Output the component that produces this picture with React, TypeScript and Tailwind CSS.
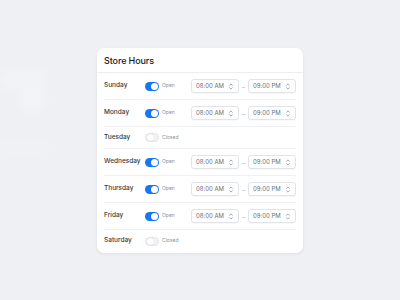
import React from "react";

// ─── Data ────────────────────────────────────────────────────────

interface DayHours {
  day: string;
  open: boolean;
  from?: string;
  to?: string;
}

const hours: DayHours[] = [
  { day: "Sunday", open: true, from: "08:00 AM", to: "09:00 PM" },
  { day: "Monday", open: true, from: "08:00 AM", to: "09:00 PM" },
  { day: "Tuesday", open: false },
  { day: "Wednesday", open: true, from: "08:00 AM", to: "09:00 PM" },
  { day: "Thursday", open: true, from: "08:00 AM", to: "09:00 PM" },
  { day: "Friday", open: true, from: "08:00 AM", to: "09:00 PM" },
  { day: "Saturday", open: false },
];

// ─── Toggle ──────────────────────────────────────────────────────

function Toggle({ on }: { on: boolean }) {
  return (
    <span
      className={`flex h-[9px] w-[14px] shrink-0 items-center rounded-full p-[1px] ${
        on ? "justify-end bg-[#1677f2]" : "justify-start border border-[#e3e5e9] bg-[#f1f2f4]"
      }`}
    >
      <span className="h-[7px] w-[7px] rounded-full bg-white shadow-[0_0_1px_rgba(0,0,0,0.25)]" />
    </span>
  );
}

// ─── Time Select ─────────────────────────────────────────────────

function TimeSelect({ value }: { value: string }) {
  return (
    <div className="flex h-[14px] w-[48px] items-center justify-between rounded-[3px] border border-[#e0e3e8] bg-white pl-[4px] pr-[5px] shadow-[0_1px_1px_rgba(0,0,0,0.03)]">
      <span className="text-[6px] leading-none text-[#6a707a]">{value}</span>
      <svg width="4" height="7" viewBox="0 0 4 7" fill="none" stroke="#8a919b" strokeWidth="0.8" strokeLinecap="round" strokeLinejoin="round">
        <path d="M0.6 2.3 L2 0.9 L3.4 2.3" />
        <path d="M0.6 4.7 L2 6.1 L3.4 4.7" />
      </svg>
    </div>
  );
}

// ─── Row ─────────────────────────────────────────────────────────

function HoursRow({ item, last }: { item: DayHours; last: boolean }) {
  return (
    <div
      className={`flex items-center ${item.open ? "h-[27px]" : "h-[22px]"} ${
        last ? "" : "border-b border-[#eef0f2]"
      }`}
    >
      <span className="w-[41px] text-[6.5px] font-medium text-[#353a42]">{item.day}</span>
      <div className="flex w-[46px] items-center gap-[3px]">
        <Toggle on={item.open} />
        <span className="text-[5px] text-[#8b919a]">{item.open ? "Open" : "Closed"}</span>
      </div>
      {item.open && (
        <div className="flex items-center">
          <TimeSelect value={item.from!} />
          <span className="flex w-[9px] justify-center text-[6px] text-[#a4a9b1]">–</span>
          <TimeSelect value={item.to!} />
        </div>
      )}
    </div>
  );
}

// ─── App ─────────────────────────────────────────────────────────

export default function App() {
  return (
    <div
      className="relative flex h-[300px] w-[400px] items-center justify-center overflow-hidden bg-[#eef0f3]"
      style={{ fontFamily: "Inter, 'Noto Sans', sans-serif" }}
    >
      <div className="absolute left-[0px] top-[70px] h-[20px] w-[45px] bg-white/25 blur-[5px]" />
      <div className="absolute left-[20px] top-[90px] h-[20px] w-[25px] bg-white/30 blur-[5px]" />
      <div className="absolute left-[0px] top-[140px] h-[14px] w-[50px] bg-white/15 blur-[6px]" />
      <div className="relative mt-[1px] w-[206px] rounded-[7px] bg-white shadow-[0_1px_3px_rgba(20,30,50,0.08)]">
        <div className="flex h-[25px] items-center border-b border-[#eceef1] px-[7px] pt-[1px]">
          <span className="text-[9px] font-medium tracking-[-0.1px] text-[#1d2128]">Store Hours</span>
        </div>
        <div className="px-[7px] pb-[1px]">
          {hours.map((h, i) => (
            <HoursRow key={h.day} item={h} last={i === hours.length - 1} />
          ))}
        </div>
      </div>
    </div>
  );
}
